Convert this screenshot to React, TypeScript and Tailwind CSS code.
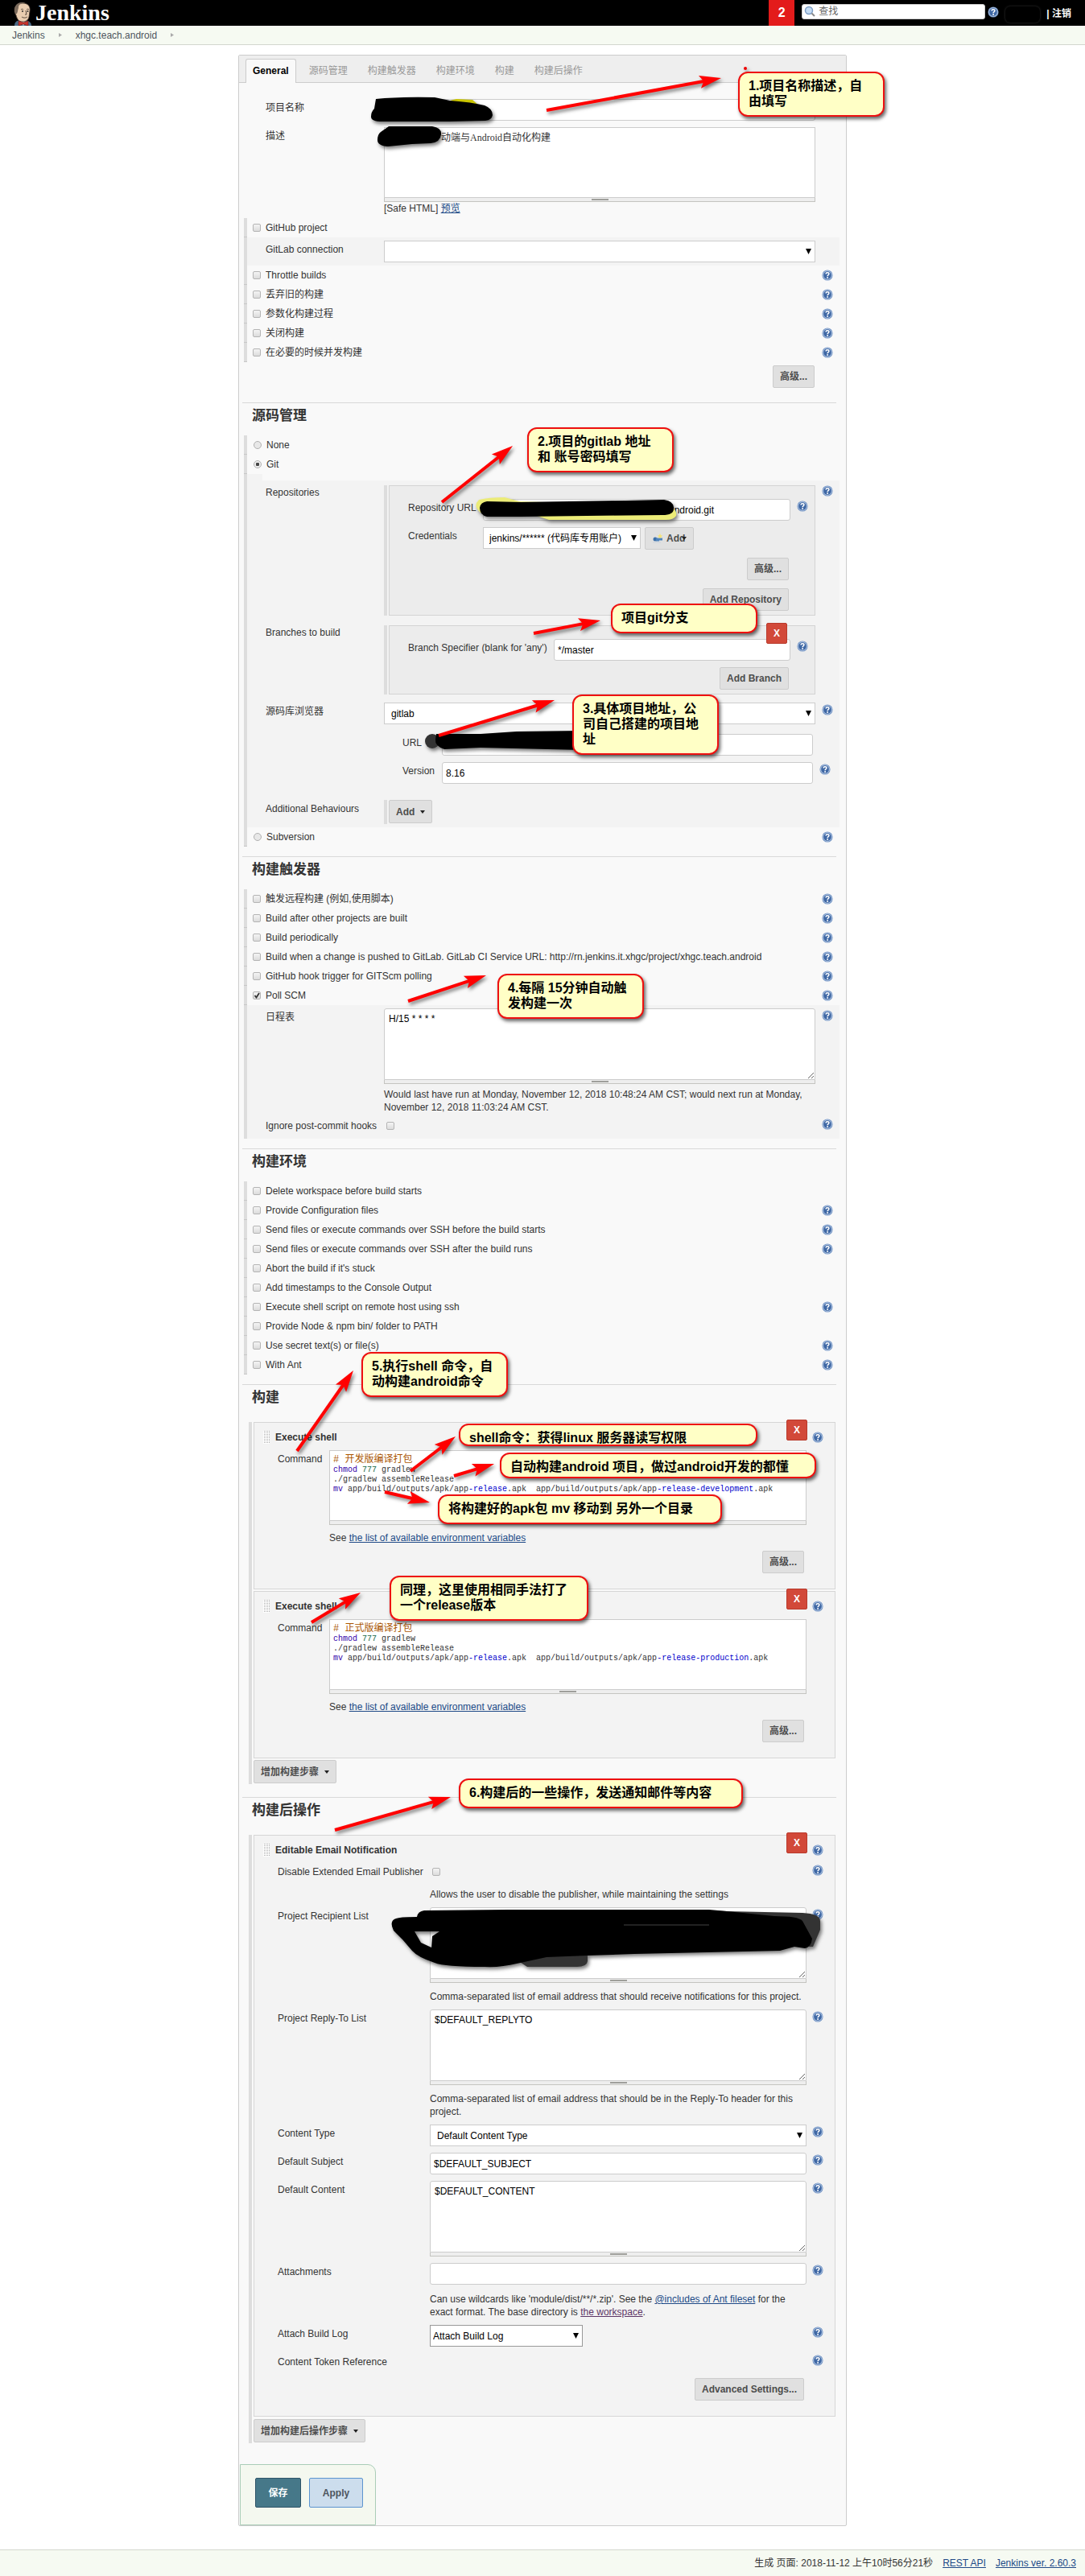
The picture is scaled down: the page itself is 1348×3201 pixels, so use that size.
import { useId } from 'react';
import type { ReactNode } from 'react';

interface Option {
  label: string;
  help?: boolean;
  checked?: boolean;
}

interface Point {
  x: number;
  y: number;
}

const tabs = ['源码管理', '构建触发器', '构建环境', '构建', '构建后操作'];

const generalOptions: Option[] = [
  { label: 'Throttle builds', help: true },
  { label: '丢弃旧的构建', help: true },
  { label: '参数化构建过程', help: true },
  { label: '关闭构建', help: true },
  { label: '在必要的时候并发构建', help: true },
];

const triggerOptions: Option[] = [
  { label: '触发远程构建 (例如,使用脚本)', help: true },
  { label: 'Build after other projects are built', help: true },
  { label: 'Build periodically', help: true },
  {
    label: 'Build when a change is pushed to GitLab. GitLab CI Service URL: http://rn.jenkins.it.xhgc/project/xhgc.teach.android',
    help: true,
  },
  { label: 'GitHub hook trigger for GITScm polling', help: true },
  { label: 'Poll SCM', help: true, checked: true },
];

const environmentOptions: Option[] = [
  { label: 'Delete workspace before build starts' },
  { label: 'Provide Configuration files', help: true },
  { label: 'Send files or execute commands over SSH before the build starts', help: true },
  { label: 'Send files or execute commands over SSH after the build runs', help: true },
  { label: "Abort the build if it's stuck" },
  { label: 'Add timestamps to the Console Output' },
  { label: 'Execute shell script on remote host using ssh', help: true },
  { label: 'Provide Node & npm bin/ folder to PATH' },
  { label: 'Use secret text(s) or file(s)', help: true },
  { label: 'With Ant', help: true },
];

const callouts = [
  { text: '1.项目名称描述，自\n由填写', place: 'left-[620px] top-[20px] w-[182px]' },
  { text: '2.项目的gitlab 地址\n和 账号密码填写', place: 'left-[358px] top-[462px] w-[182px]' },
  { text: '项目git分支', place: 'left-[462px] top-[681px] w-[182px]' },
  { text: '3.具体项目地址，公\n司自己搭建的项目地\n址', place: 'left-[414px] top-[794px] w-[182px]' },
  { text: '4.每隔 15分钟自动触\n发构建一次', place: 'left-[321px] top-[1141px] w-[182px]' },
  { text: '5.执行shell 命令，自\n动构建android命令', place: 'left-[152px] top-[1611px] w-[182px]' },
  { text: 'shell命令：获得linux 服务器读写权限', place: 'left-[273px] top-[1700px] w-[371px] h-7' },
  { text: '自动构建android 项目，做过android开发的都懂', place: 'left-[324px] top-[1736px] w-[393px] h-8' },
  { text: '将构建好的apk包 mv 移动到 另外一个目录', place: 'left-[247px] top-[1788px] w-[353px]' },
  { text: '同理，这里使用相同手法打了\n一个release版本', place: 'left-[187px] top-[1889px] w-[247px]' },
  { text: '6.构建后的一些操作，发送通知邮件等内容', place: 'left-[273px] top-[2141px] w-[353px]' },
];

const arrows: { from: Point; to: Point }[] = [
  { from: { x: 382, y: 68 }, to: { x: 599, y: 28 } },
  { from: { x: 252, y: 555 }, to: { x: 340, y: 485 } },
  { from: { x: 366, y: 718 }, to: { x: 449, y: 702 } },
  { from: { x: 248, y: 845 }, to: { x: 392, y: 801 } },
  { from: { x: 210, y: 1175 }, to: { x: 307, y: 1143 } },
  { from: { x: 72, y: 1734 }, to: { x: 142, y: 1634 } },
  { from: { x: 213, y: 1759 }, to: { x: 269, y: 1716 } },
  { from: { x: 267, y: 1765 }, to: { x: 317, y: 1750 } },
  { from: { x: 181, y: 1785 }, to: { x: 237, y: 1798 } },
  { from: { x: 90, y: 1947 }, to: { x: 151, y: 1910 } },
  { from: { x: 119, y: 2205 }, to: { x: 263, y: 2164 } },
];

function HelpIcon() {
  return (
    <svg className="w-3.5 h-3.5" viewBox="0 0 16 16" fill="none">
      <circle cx="8" cy="8" r="7.5" fill="#6f92c4" />
      <circle cx="8" cy="8" r="6.1" fill="#3f68a5" stroke="#c9d8ec" strokeWidth="0.9" />
      <path d="M5.9 6.3C5.9 4.9 6.8 4.2 8 4.2s2.2.7 2.2 1.9c0 1.4-2.1 1.6-2.1 3.2" stroke="#fff" strokeWidth="1.7" />
      <circle cx="8.1" cy="11.5" r="1.1" fill="#fff" />
    </svg>
  );
}

function HelpButton({ className = '' }: { className?: string }) {
  return (
    <button type="button" aria-label="Help" className={`flex justify-center items-start ${className}`}>
      <HelpIcon />
    </button>
  );
}

function CaretDown() {
  return (
    <svg className="w-1.5 h-1.5" viewBox="0 0 6 6">
      <path d="M0 1h6L3 5z" fill="#222" />
    </svg>
  );
}

function ButlerLogo() {
  return (
    <svg className="w-6 h-[29px]" viewBox="0 0 24 29">
      <path d="M2 29c0-4 2-6 6-7l8 0c4 1 7 3 7 7z" fill="#4a6a86" />
      <path d="M8 21l5 8 4-8z" fill="#f4f4f4" />
      <path d="M3 14C0 7 4 1 12 1c7 0 10 4 9 10l-1 7c-1 4-4 6-8 6-5 0-7-4-8-8z" fill="#e9cdb0" stroke="#4b3b30" strokeWidth="0.8" />
      <path d="M3 14C0 7 4 0 11 0c2 0 4 .5 5 1-5 0-9 1-9 5 0 2-1 3-1 5l-1 3z" fill="#7a6a5c" />
      <path d="M10 9c1-1 2-1 3 0M17 9c1-1 2-1 3 0M16 10l1 5-2 0M11 18c2 1.500 5 1.500 7 0" stroke="#4b3b30" strokeWidth="0.9" fill="none" />
      <circle cx="12" cy="11" r="0.9" fill="#222" />
      <circle cx="18.500" cy="11" r="0.9" fill="#222" />
      <path d="M7 23l6 2 6-2v6l-6-2-6 2z" fill="#c8342c" stroke="#6d1a16" strokeWidth="0.6" />
    </svg>
  );
}

function KeyIcon() {
  return (
    <svg className="w-3.5 h-3.5" viewBox="0 0 14 14">
      <circle cx="4" cy="8" r="2.500" fill="#3d6fa8" />
      <path d="M5 6.500h8v3H9v1H5z" fill="#4f84bd" />
      <path d="M10 1l1 2 2 .5-1.500 1.500.3 2L10 6l-1.800 1 .3-2L7 3.500 9 3z" fill="#f3e27a" />
      <path d="M1 12h10" stroke="#ccd4dd" />
    </svg>
  );
}

function Checkbox({ id, checked }: { id: string; checked?: boolean }) {
  return (
    <span className="relative flex w-2.5 h-2.5">
      <input
        id={id}
        type="checkbox"
        defaultChecked={checked}
        className="peer appearance-none w-2.5 h-2.5 rounded-[2px] border border-[#b4b4b4] bg-linear-to-b from-[#f4f4f4] to-[#dcdcdc]"
      />
      <svg className="absolute inset-0 hidden peer-checked:block pointer-events-none" viewBox="0 0 10 10">
        <path d="M2.500 5l2 2.500L8 2" stroke="#333" strokeWidth="1.800" fill="none" />
      </svg>
    </span>
  );
}

function OptionRow({ label, help, checked }: Option) {
  const id = useId();
  return (
    <div className="flex">
      <span className="w-1 bg-[#ddd] border-b border-[#c8c8c8]" />
      <div className="flex-1 flex items-center gap-1.5 pl-[7px] py-1">
        <Checkbox id={id} checked={checked} />
        <label htmlFor={id}>{label}</label>
      </div>
      {help && <HelpButton className="w-[30px] pt-[5px]" />}
    </div>
  );
}

function RadioRow({ label, help, checked }: Option) {
  const id = useId();
  return (
    <div className="flex">
      <span className="w-1 bg-[#ddd] border-b border-[#c8c8c8]" />
      <div className="flex-1 flex items-center gap-1.5 pl-2 py-1">
        <input
          id={id}
          type="radio"
          name="scm"
          defaultChecked={checked}
          className="appearance-none w-2.5 h-2.5 rounded-full border border-[#b0b0b0] bg-[#e8e8e8] checked:bg-[radial-gradient(circle,#444_35%,#eee_45%)]"
        />
        <label htmlFor={id}>{label}</label>
      </div>
      {help && <HelpButton className="w-[30px] pt-[5px]" />}
    </div>
  );
}

interface FieldProps {
  label: string;
  cols: string;
  help?: boolean;
  id?: string;
  children?: ReactNode;
}

function Field({ label, cols, help, id, children }: FieldProps) {
  return (
    <div className={`grid ${cols}`}>
      <label htmlFor={id} className="pt-[7px] pb-2 whitespace-nowrap">
        {label}
      </label>
      <div className="py-1 min-w-0">{children}</div>
      {help && <HelpButton className="pt-1.5" />}
    </div>
  );
}

function TextInput({ id, value = '' }: { id: string; value?: string }) {
  return (
    <input
      id={id}
      type="text"
      defaultValue={value}
      className="block w-full h-[27px] px-1 bg-white text-black border border-[#ccc] rounded-[3px]"
    />
  );
}

function Select({ id, value, className = 'border-[#ccc] pl-2' }: { id: string; value: string; className?: string }) {
  return (
    <div className="relative">
      <select id={id} className={`appearance-none block w-full h-[27px] bg-white text-black border ${className}`}>
        <option>{value}</option>
      </select>
      <svg className="absolute right-[5px] top-2.5 w-[7px] h-[7px] pointer-events-none" viewBox="0 0 7 7">
        <path d="M0 0h7L3.500 7z" fill="#000" />
      </svg>
    </div>
  );
}

function ResizeHandle() {
  return (
    <div className="h-[5px] flex justify-center items-center bg-[#eee] border border-t-0 border-[#c4c4c0]">
      <span className="w-[21px] h-0.5 bg-[#9f9f9b]" />
    </div>
  );
}

function TextArea({ id, value = '' }: { id: string; value?: string }) {
  return (
    <>
      <textarea
        id={id}
        defaultValue={value}
        className="block w-full h-[89px] px-[5px] py-1 bg-white text-black border border-[#ccc] rounded-t-[3px] resize-y"
      />
      <ResizeHandle />
    </>
  );
}

function Button({ children, className = 'h-7' }: { children: ReactNode; className?: string }) {
  return (
    <button
      type="button"
      className={`inline-flex items-center px-2 font-bold text-[#4d4d4d] bg-[#e0e0e0] border border-[#ccc] rounded-[2px] ${className}`}
    >
      {children}
    </button>
  );
}

function DeleteButton({ className }: { className: string }) {
  return (
    <button
      type="button"
      className={`absolute -top-1 w-[26px] h-[26px] font-bold text-white bg-[#d24939] border border-[#b93a2c] rounded-[2px] ${className}`}
    >
      X
    </button>
  );
}

function SectionHeader({ title }: { title: string }) {
  return (
    <div className="mt-3 -ml-0.5 mr-1 border-t border-[#d9d9d9] pt-1.5 pb-3.5 pl-3">
      <h2 className="text-[17px] leading-5 font-bold">{title}</h2>
    </div>
  );
}

function StepTitle({ title }: { title: string }) {
  return (
    <div className="flex items-center pt-2.5 pb-1 pl-[11px] pr-[7px]">
      <span className="w-2 h-4 mr-[7px] bg-[repeating-linear-gradient(90deg,#fff_0_1px,transparent_1px_2px),repeating-linear-gradient(#aaa_0_1px,#fff_1px_2px)]" />
      <h3 className="flex-1 font-bold">{title}</h3>
      <HelpButton className="w-7" />
    </div>
  );
}

const link = 'text-[#204a87] underline';

function ShellStep({ comment, target }: { comment: string; target: string }) {
  const id = useId();
  return (
    <div className="relative bg-[#f3f3f3] border border-[#d6d6d6]">
      <DeleteButton className="right-[34px]" />
      <StepTitle title="Execute shell" />
      <div className="pl-[29px] pr-[7px]">
        <div className="grid grid-cols-[64px_1fr_28px]">
          <span id={id} className="pt-[7px]">
            Command
          </span>
          <div className="py-1 min-w-0">
            <div
              role="textbox"
              aria-multiline="true"
              aria-labelledby={id}
              className="h-[88px] pt-1 pl-1 bg-white border border-[#ccc] font-['Liberation_Mono','Noto_Sans_CJK_SC',monospace] text-[10px] leading-3 whitespace-pre overflow-hidden"
            >
              <div className="text-xs leading-[14px] text-[#a50]"># {comment}</div>
              <div>
                <span className="text-[#30a]">chmod</span> <span className="text-[#164]">777</span> gradlew
              </div>
              <div>./gradlew assembleRelease</div>
              <div>
                <span className="text-[#30a]">mv</span> app/build/outputs/apk/app
                <span className="text-[#00c]">-release</span>.apk{'  '}app/build/outputs/apk/app
                <span className="text-[#00c]">{target}</span>.apk
              </div>
            </div>
            <ResizeHandle />
          </div>
        </div>
        <p className="pl-16 pt-1">
          See{' '}
          <a href="#env" className={link}>
            the list of available environment variables
          </a>
        </p>
        <div className="flex justify-end pt-2 pb-[19px] pr-[31px]">
          <Button>高级...</Button>
        </div>
      </div>
    </div>
  );
}

function Arrow({ from, to }: { from: Point; to: Point }) {
  const length = Math.hypot(to.x - from.x, to.y - from.y);
  const angle = (Math.atan2(to.y - from.y, to.x - from.x) * 180) / Math.PI;
  return (
    <g transform={`translate(${to.x} ${to.y}) rotate(${angle})`}>
      <line x1={-length} y1="0" x2="-18" y2="0" stroke="#f00" strokeWidth="4" />
      <path d="M0 0L-27-8L-22 0L-27 8z" fill="#f00" />
    </g>
  );
}

function Annotations() {
  return (
    <div className="absolute inset-0 pointer-events-none">
      <svg className="absolute inset-0 w-full h-full overflow-visible drop-shadow-[2px_3px_2px_rgba(0,0,0,0.5)]">
        <path d="M262 56L270 54L290 55L298 62L270 62z" fill="#c9c400" />
        <path d="M170 54Q200 51 243 52L262 56Q290 58 305 62Q315 66 315 74Q314 80 306 81L262 82L178 82Q164 82 164 76Q164 70 168 66z" />
        <path d="M186 88L240 88Q252 90 251 98Q250 108 238 109L215 110L185 113Q172 112 172 105Q172 98 176 95z" />
        <path d="M298 552Q310 549 330 549L348 554L535 560Q545 565 543 572Q540 577 530 577L385 577L370 572L300 568Q290 560 298 552z" fill="#ecec78" />
        <path d="M308 554L350 555L480 553L528 552Q541 554 540 563Q540 571 526 571L350 573L308 573Q299 571 299 562Q300 555 308 554z" />
        <circle cx="240" cy="852" r="9" fill="#333" />
        <path d="M245 843L300 843L345 840L425 839L425 863L300 860L255 862Q243 858 244 850z" />
        <path d="M584 2305L606 2306L700 2308Q722 2309 722 2318L722 2329L713 2350L600 2350z" fill="#333" />
        <path d="M335 2360L433 2360L433 2368Q432 2375 420 2375L358 2375z" fill="#333" />
        <path
          fillRule="evenodd"
          d="M195 2315Q200 2313 221 2313Q222 2306 230 2305L334 2304L584 2304L606 2306L665 2312Q695 2312 700 2318L712 2340Q711 2350 703 2352L690 2350L672 2355L491 2359L433 2361L382 2363L345 2371Q325 2376 305 2375Q255 2375 243 2370Q222 2363 215 2355L203 2341L192 2330Q186 2318 195 2315zM218 2331L249 2331L240 2337L239 2351L226 2345z"
        />
        <path d="M478 2323h106" stroke="#444" />
        <circle cx="629" cy="16" r="2" fill="#e00" />
        {arrows.map((arrow) => (
          <Arrow key={arrow.from.y} from={arrow.from} to={arrow.to} />
        ))}
      </svg>
      {callouts.map((callout) => (
        <p
          key={callout.text}
          className={`absolute pt-1.5 pb-2 pl-[11px] bg-[#ffffc6] border-2 border-[#ee1010] rounded-xl shadow-[2px_3px_4px_rgba(0,0,0,0.6)] text-base leading-[19px] font-bold text-black whitespace-pre ${callout.place}`}
        >
          {callout.text}
        </p>
      ))}
    </div>
  );
}

function Header() {
  return (
    <header>
      <div className="flex items-center h-8 bg-black text-white">
        <a href="#home" className="flex items-center self-end gap-1 pl-4">
          <ButlerLogo />
          <span className="pb-1 font-['Liberation_Serif',serif] text-[28px] leading-6 font-bold">Jenkins</span>
        </a>
        <a href="#alerts" className="ml-auto mr-[9px] w-8 h-8 flex items-center justify-center bg-[#e31b1b] text-base font-bold">
          2
        </a>
        <div className="flex items-center gap-1 w-[228px] h-[19px] px-0.5 mb-1 bg-white rounded-[3px] border border-[#ccc]">
          <svg className="w-3.5 h-3.5" viewBox="0 0 14 14" fill="none">
            <circle cx="6" cy="6" r="4.500" fill="#c5dcf3" stroke="#7b9cc4" strokeWidth="1.500" />
            <path d="M9.500 9.500L13 13" stroke="#8a8a8a" strokeWidth="2" />
          </svg>
          <input type="search" aria-label="查找" placeholder="查找" className="flex-1 min-w-0 h-4 text-black placeholder:text-[#666] outline-none" />
        </div>
        <HelpButton className="ml-[3px] mb-0.5" />
        <span className="ml-2 mt-1 w-[43px] h-5 rounded-md bg-black shadow-[0_0_3px_#333]" />
        <span className="ml-2 mr-[17px] mt-0.5 font-bold">
          | <a href="#logout">注销</a>
        </span>
      </div>
      <nav className="flex items-center gap-[17px] h-6 pl-[15px] bg-[#f6faf2] border-b border-[#d3d7cf] text-[#4d545d]">
        <a href="#jenkins">Jenkins</a>
        <svg className="w-1 h-[5px]" viewBox="0 0 4 5">
          <path d="M0 0l4 2.500L0 5z" fill="#aaa" />
        </svg>
        <a href="#job">xhgc.teach.android</a>
        <svg className="w-1 h-[5px]" viewBox="0 0 4 5">
          <path d="M0 0l4 2.500L0 5z" fill="#aaa" />
        </svg>
      </nav>
    </header>
  );
}

function GeneralSection() {
  return (
    <section>
      <div className="pt-4 pl-[27px]">
        <Field label="项目名称" id="name" cols="grid-cols-[147px_1fr_30px]">
          <TextInput id="name" />
        </Field>
        <Field label="描述" id="description" cols="grid-cols-[147px_1fr_30px]">
          <textarea
            id="description"
            defaultValue="动端与Android自动化构建"
            className="block w-full h-[88px] pl-[70px] pt-1 bg-white border border-[#ccc] resize-none font-['Liberation_Serif','Noto_Sans_CJK_SC',serif]"
          />
          <ResizeHandle />
          <p>
            [Safe HTML]{' '}
            <a href="#preview" className={link}>
              预览
            </a>
          </p>
        </Field>
      </div>
      <OptionRow label="GitHub project" />
      <div className="border-l-4 border-[#ddd] bg-[#f3f3f3] pl-[23px]">
        <Field label="GitLab connection" id="gitlab" cols="grid-cols-[147px_1fr_30px]">
          <Select id="gitlab" value="" />
        </Field>
      </div>
      {generalOptions.map((option) => (
        <OptionRow key={option.label} {...option} />
      ))}
      <div className="flex justify-end pt-1 pb-1.5 pr-[31px]">
        <Button>高级...</Button>
      </div>
    </section>
  );
}

function SourceSection() {
  const cols = 'grid-cols-[147px_1fr_30px]';
  return (
    <section>
      <SectionHeader title="源码管理" />
      <RadioRow label="None" />
      <RadioRow label="Git" checked />
      <div className="border-l-4 border-[#ddd]">
        <div className="w-[19px] h-2 bg-[#f3f3f3]" />
        <div className="bg-[#f3f3f3] pl-[23px]">
          <div className={`grid ${cols}`}>
            <span className="pt-[7px]">Repositories</span>
            <div className="my-1.5 pl-0.5 border-l-4 border-[#ddd]">
              <div className="bg-[#ececec] border border-[#d3d3d3] pt-3 pl-[23px]">
                <Field label="Repository URL" id="repo-url" cols="grid-cols-[93px_1fr_30px]" help>
                  <input
                    id="repo-url"
                    type="text"
                    defaultValue="android.git"
                    className="block w-full h-[27px] pl-[230px] bg-white text-black border border-[#ccc] rounded-[3px]"
                  />
                </Field>
                <Field label="Credentials" id="credentials" cols="grid-cols-[93px_1fr_30px]">
                  <div className="flex gap-[5px]">
                    <div className="w-[196px]">
                      <Select id="credentials" value="jenkins/****** (代码库专用账户)" className="border-[#ccc] pl-[7px]" />
                    </div>
                    <Button className="h-7 gap-1">
                      <KeyIcon />
                      <span>Add</span>
                      <span className="-ml-2">
                        <CaretDown />
                      </span>
                    </Button>
                  </div>
                </Field>
                <div className="flex flex-col items-end gap-2.5 pt-1.5 pb-[5px] pr-8">
                  <Button>高级...</Button>
                  <Button>Add Repository</Button>
                </div>
              </div>
            </div>
            <HelpButton className="pt-1.5" />
          </div>

          <div className={`grid ${cols}`}>
            <span className="pt-[7px]">Branches to build</span>
            <div className="my-1.5 pl-0.5 border-l-4 border-[#ddd]">
              <div className="relative bg-[#ececec] border border-[#d3d3d3] pt-3 pl-[23px]">
                <Field label="Branch Specifier (blank for 'any')" id="branch" cols="grid-cols-[181px_1fr_30px]" help>
                  <TextInput id="branch" value="*/master" />
                </Field>
                <DeleteButton className="right-[34px]" />
                <div className="flex justify-end pt-1 pb-[5px] pr-8">
                  <Button>Add Branch</Button>
                </div>
              </div>
            </div>
          </div>

          <Field label="源码库浏览器" id="browser" cols={cols} help>
            <Select id="browser" value="gitlab" />
          </Field>
          <div className="ml-[147px] pl-[23px] pr-[3px] pt-1 pb-3">
            <Field label="URL" id="browser-url" cols="grid-cols-[49px_1fr_30px]">
              <TextInput id="browser-url" />
            </Field>
            <Field label="Version" id="version" cols="grid-cols-[49px_1fr_30px]" help>
              <TextInput id="version" value="8.16" />
            </Field>
          </div>
          <Field label="Additional Behaviours" cols={cols}>
            <div className="h-[30px] pl-0.5 border-l-4 border-[#ddd]">
              <Button className="h-[29px] gap-[7px]">
                Add <CaretDown />
              </Button>
            </div>
          </Field>
        </div>
      </div>
      <RadioRow label="Subversion" help />
    </section>
  );
}

function TriggerSection() {
  const cols = 'grid-cols-[147px_1fr_30px]';
  return (
    <section>
      <SectionHeader title="构建触发器" />
      {triggerOptions.map((option) => (
        <OptionRow key={option.label} {...option} />
      ))}
      <div className="border-l-4 border-[#ddd] bg-[#f3f3f3] pl-[23px]">
        <Field label="日程表" id="schedule" cols={cols} help>
          <TextArea id="schedule" value="H/15 * * * *" />
        </Field>
        <p className="ml-[147px] mr-[30px] pt-px">
          Would last have run at Monday, November 12, 2018 10:48:24 AM CST; would next run at Monday, November 12, 2018
          11:03:24 AM CST.
        </p>
        <Field label="Ignore post-commit hooks" id="ignore-hooks" cols={cols} help>
          <div className="pl-[3px] pt-1.5">
            <Checkbox id="ignore-hooks" />
          </div>
        </Field>
      </div>
    </section>
  );
}

function EmailStep() {
  const cols = 'grid-cols-[189px_1fr_28px]';
  return (
    <div className="relative bg-[#f3f3f3] border border-[#d6d6d6]">
      <DeleteButton className="right-[34px]" />
      <StepTitle title="Editable Email Notification" />
      <div className="pl-[29px] pr-[7px]">
        <Field label="Disable Extended Email Publisher" id="disable" cols={cols} help>
          <div className="pl-[3px] pt-1.5">
            <Checkbox id="disable" />
          </div>
          <p className="pt-[15px]">Allows the user to disable the publisher, while maintaining the settings</p>
        </Field>
        <Field label="Project Recipient List" id="recipients" cols={cols} help>
          <TextArea id="recipients" />
          <p className="pt-[9px]">Comma-separated list of email address that should receive notifications for this project.</p>
        </Field>
        <Field label="Project Reply-To List" id="reply-to" cols={cols} help>
          <TextArea id="reply-to" value="$DEFAULT_REPLYTO" />
          <p className="pt-[9px]">
            Comma-separated list of email address that should be in the Reply-To header for this project.
          </p>
        </Field>
        <Field label="Content Type" id="content-type" cols={cols} help>
          <Select id="content-type" value="Default Content Type" />
        </Field>
        <Field label="Default Subject" id="subject" cols={cols} help>
          <TextInput id="subject" value="$DEFAULT_SUBJECT" />
        </Field>
        <Field label="Default Content" id="content" cols={cols} help>
          <TextArea id="content" value="$DEFAULT_CONTENT" />
        </Field>
        <Field label="Attachments" id="attachments" cols={cols} help>
          <TextInput id="attachments" />
          <p className="pt-2.5">
            Can use wildcards like 'module/dist/**/*.zip'. See the{' '}
            <a href="#fileset" className={link}>
              @includes of Ant fileset
            </a>{' '}
            for the exact format. The base directory is{' '}
            <a href="#workspace" className="text-[#5c3566] underline">
              the workspace
            </a>
            .
          </p>
        </Field>
        <Field label="Attach Build Log" id="build-log" cols={cols} help>
          <div className="w-[190px]">
            <Select id="build-log" value="Attach Build Log" className="border-[#999] pl-[3px]" />
          </div>
        </Field>
        <Field label="Content Token Reference" cols={cols} help />
        <div className="flex justify-end pt-1 pb-[19px] pr-[31px]">
          <Button>Advanced Settings...</Button>
        </div>
      </div>
    </div>
  );
}

export default function App() {
  return (
    <div className="bg-white text-[#333] text-xs leading-4 font-['Liberation_Sans','Noto_Sans_CJK_SC',sans-serif]">
      <Header />

      <main className="relative mx-auto mt-3 max-w-[756px] bg-[#f9f9f9] border border-[#ccc] rounded-[2px]">
        <div className="flex items-end h-[34px] pl-2 bg-[#eee] border-b border-[#ccc]">
          <a href="#general" className="-mb-px px-2 pt-1.5 pb-[7px] mr-1 bg-[#f9f9f9] border border-b-0 border-[#ccc] rounded-t-[3px] font-bold text-black">
            General
          </a>
          {tabs.map((tab) => (
            <a key={tab} href={`#${tab}`} className="pl-3 pr-[13px] pb-1.5 text-[#999]">
              {tab}
            </a>
          ))}
        </div>

        <form className="pl-1.5 pr-2">
          <GeneralSection />
          <SourceSection />
          <TriggerSection />

          <section>
            <SectionHeader title="构建环境" />
            {environmentOptions.map((option) => (
              <OptionRow key={option.label} {...option} />
            ))}
          </section>

          <section>
            <SectionHeader title="构建" />
            <div className="flex flex-col gap-0.5 mt-1.5 ml-1.5 mr-[5px] pl-0.5 pb-px border-l-4 border-[#ddd]">
              <ShellStep comment="开发版编译打包" target="-release-development" />
              <ShellStep comment="正式版编译打包" target="-release-production" />
              <div>
                <Button className="h-[29px] gap-[7px]">
                  增加构建步骤 <CaretDown />
                </Button>
              </div>
            </div>
          </section>

          <section className="pt-1">
            <SectionHeader title="构建后操作" />
            <div className="flex flex-col gap-[3px] mt-1.5 ml-1.5 mr-[5px] pl-0.5 pb-px border-l-4 border-[#ddd]">
              <EmailStep />
              <div>
                <Button className="h-[29px] gap-[7px]">
                  增加构建后操作步骤 <CaretDown />
                </Button>
              </div>
            </div>
          </section>
        </form>

        <div className="flex gap-2.5 w-[169px] h-[76px] mt-[26px] ml-px pl-[18px] pt-4 bg-[#f4f8ef] border border-[#aacdb8] rounded-tr-[10px]">
          <button type="submit" className="w-[57px] h-[37px] font-bold text-white bg-[#467889] border border-[#2f5468] rounded-[2px]">
            保存
          </button>
          <button type="button" className="w-[67px] h-[37px] font-bold text-[#4d545d] bg-[#ccdded] border border-[#5c94d0] rounded-[2px]">
            Apply
          </button>
        </div>

        <Annotations />
      </main>

      <footer className="flex justify-end gap-3 mt-[29px] pt-2 pb-2 pr-[11px] bg-[#f6faf2] border-t border-[#d3d7cf]">
        <span>生成 页面: 2018-11-12 上午10时56分21秒</span>
        <a href="#api" className={link}>
          REST API
        </a>
        <a href="#version" className={link}>
          Jenkins ver. 2.60.3
        </a>
      </footer>
    </div>
  );
}
